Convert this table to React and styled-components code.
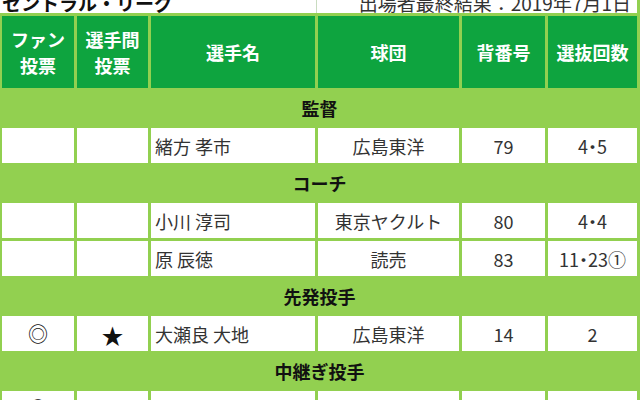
import React from 'react'
import styled, { createGlobalStyle } from 'styled-components'

const GlobalStyle = createGlobalStyle`
  html, body {
    margin: 0;
    padding: 0;
    background: #92d050;
    font-family: "Noto Sans CJK JP", "Noto Sans", sans-serif;
  }
`

const Page = styled.div`
  width: 640px;
  height: 400px;
  overflow: hidden;
`

const TopBar = styled.div`
  display: grid;
  grid-template-columns: 316px 1fr;
  column-gap: 1px;
  height: 13px;
  margin-right: 3px;
  background: #c9dcc0;
`

const TopCell = styled.div`
  background: #fff;
  overflow: hidden;
  display: flex;
  align-items: flex-end;
  justify-content: ${({ $right }) => ($right ? 'flex-end' : 'flex-start')};
  padding: 0 ${({ $right }) => ($right ? '6px' : '0')} 0 ${({ $right }) => ($right ? '0' : '2px')};
`

const TopText = styled.span`
  font-size: ${({ $big }) => ($big ? '19px' : '19px')};
  font-weight: ${({ $big }) => ($big ? 700 : 400)};
  color: ${({ $big }) => ($big ? '#111' : '#333')};
  line-height: 1;
  white-space: nowrap;
  margin-bottom: 1px;
`

const Sheet = styled.div`
  display: grid;
  grid-template-columns: 72px 71px 164px 141px 83px 89px;
  gap: 3px;
  padding: 3px 3px 0 2px;
`

const HeadCell = styled.div`
  height: 72px;
  background: #0ea43f;
  color: #fff;
  font-weight: 700;
  font-size: 18px;
  line-height: 26px;
  display: flex;
  align-items: center;
  justify-content: center;
  text-align: center;
`

const GroupRow = styled.div`
  grid-column: 1 / -1;
  height: 34px;
  display: flex;
  align-items: center;
  justify-content: center;
  font-weight: 700;
  font-size: 18px;
  color: #111;
`

const Cell = styled.div`
  height: 35px;
  background: #fff;
  color: #333;
  font-size: 18px;
  display: flex;
  align-items: center;
  justify-content: ${({ $left }) => ($left ? 'flex-start' : 'center')};
  padding-left: ${({ $left }) => ($left ? '4px' : '0')};
  white-space: nowrap;
  overflow: hidden;
  font-feature-settings: ${({ $palt }) => ($palt ? '"palt"' : 'normal')};
`

const Mark = styled.span`
  font-size: ${({ $size }) => $size || '18px'};
  color: #111;
`

const headers = [
  ['ファン', '投票'],
  ['選手間', '投票'],
  ['選手名'],
  ['球団'],
  ['背番号'],
  ['選抜回数'],
]

const groups = [
  { title: '監督', rows: [{ fan: '', peer: '', name: '緒方 孝市', team: '広島東洋', no: '79', count: '4・5' }] },
  {
    title: 'コーチ',
    rows: [
      { fan: '', peer: '', name: '小川 淳司', team: '東京ヤクルト', no: '80', count: '4・4' },
      { fan: '', peer: '', name: '原 辰徳', team: '読売', no: '83', count: '11・23①' },
    ],
  },
  { title: '先発投手', rows: [{ fan: '◎', peer: '★', name: '大瀬良 大地', team: '広島東洋', no: '14', count: '2' }] },
  { title: '中継ぎ投手', rows: [{ fan: '○', peer: '', name: '', team: '', no: '', count: '' }] },
]

export default function App() {
  return (
    <Page>
      <GlobalStyle />
      <TopBar>
        <TopCell>
          <TopText $big>セントラル・リーグ</TopText>
        </TopCell>
        <TopCell $right>
          <TopText>出場者最終結果：2019年7月1日</TopText>
        </TopCell>
      </TopBar>
      <Sheet>
        {headers.map((lines, i) => (
          <HeadCell key={i}>
            <div>
              {lines.map((l) => (
                <div key={l}>{l}</div>
              ))}
            </div>
          </HeadCell>
        ))}
        {groups.map((g) => (
          <React.Fragment key={g.title}>
            <GroupRow>{g.title}</GroupRow>
            {g.rows.map((r, i) => (
              <React.Fragment key={i}>
                <Cell>{r.fan && <Mark $size="20px">{r.fan}</Mark>}</Cell>
                <Cell>{r.peer && <Mark $size="22px">{r.peer}</Mark>}</Cell>
                <Cell $left>{r.name}</Cell>
                <Cell>{r.team}</Cell>
                <Cell>{r.no}</Cell>
                <Cell $palt>{r.count}</Cell>
              </React.Fragment>
            ))}
          </React.Fragment>
        ))}
      </Sheet>
    </Page>
  )
}
